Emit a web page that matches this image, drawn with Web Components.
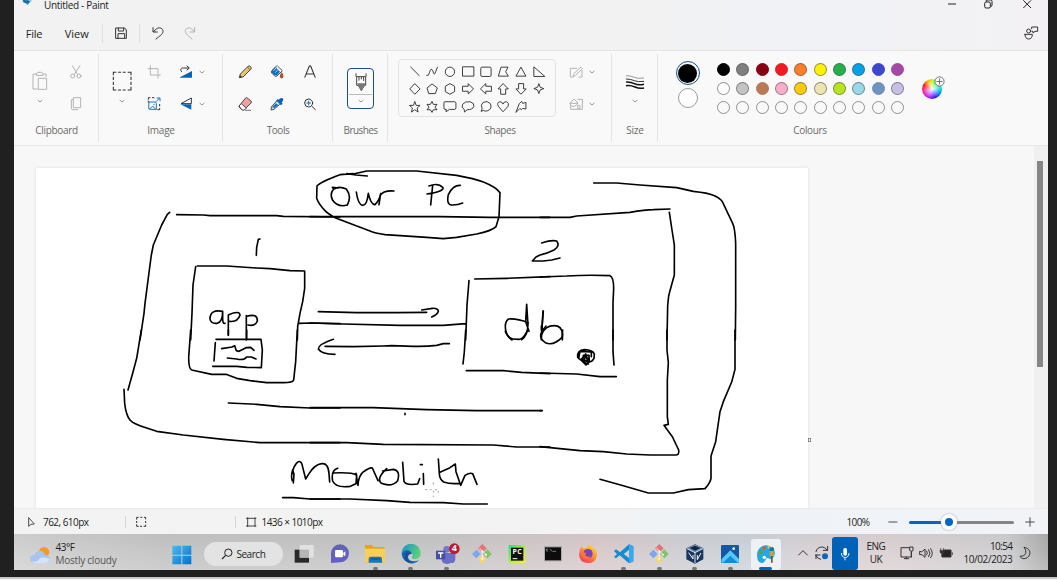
<!DOCTYPE html>
<html lang="en-GB">
<head>
<meta charset="utf-8">
<title>Untitled - Paint</title>
<style>
html,body{margin:0;height:100%;overflow:hidden}
body{font-family:"Open Sans","Noto Sans",sans-serif;font-size:10px;color:#222;background:#1c1c1c}
</style>
</head>
<body>
<paint-desktop></paint-desktop>
<script>
const define=(tag,css,html,after)=>customElements.define(tag,class extends HTMLElement{
  connectedCallback(){
    if(this.shadowRoot)return;
    const r=this.attachShadow({mode:'open'});
    r.innerHTML=`<style>:host{display:block;box-sizing:border-box}*{box-sizing:border-box}${css}</style>`+(typeof html==='function'?html(this):html);
    if(after)after(this,r);
  }
});

/* A single line of text, tracked to occupy the width given in "w". */
define('ui-label',':host{display:block;white-space:nowrap;line-height:14px;flex:none}span{display:inline-block}','<span><slot></slot></span>',(el,r)=>{
  const w=parseFloat(el.getAttribute('w'));
  if(!w)return;
  const s=r.querySelector('span'),n=el.textContent.length;
  const d=(w-s.getBoundingClientRect().width)/n;
  s.style.letterSpacing=d.toFixed(3)+'px';
  el.style.width=w+'px';
});

/* name: [centre x, centre y, width, height, markup]; artwork is on a grid three units to the pixel */
const L='fill="none" stroke="#333" stroke-width="3" stroke-linejoin="round" stroke-linecap="round"';
const G='fill="none" stroke="#b4b4b4" stroke-width="3" stroke-linejoin="round" stroke-linecap="round"';
const git='<path d="M396 117l13 13-13 13-13-13z" fill="#e57373"/><path d="M378 134l13 13-13 13-13-13z" fill="#7ea6e8"/><path d="M411 133l13 14-13 13-13-13z" fill="#84c26b"/><path d="M395 150l13 13-13 13-13-13z" fill="#f5d778"/><path d="M387 129l20 20M396 140v22" stroke="#eee" stroke-width="3"/><circle cx="396" cy="139" r="3" fill="#fff"/><circle cx="407" cy="149" r="3" fill="#fff"/><circle cx="396" cy="161" r="3" fill="#fff"/>';
const ICONS={
 logo:[82,2,10,10,'<path d="M68 -8h28l-2 12-6 3-3 7-7-5-8-3z" fill="#2c86bd"/><path d="M72 0l7 7 3-3 7 1" stroke="#17486b" stroke-width="3" fill="none"/><path d="M86-4l8 8" stroke="#9cd9ef" stroke-width="4"/>'],
 min:[876,11,10,10,'<path d="M864 11h24" stroke="#222" stroke-width="3"/>'],
 restore:[986,11,10,10,'<rect x="976" y="5" width="17" height="18" rx="4" fill="none" stroke="#222" stroke-width="3"/><path d="M981 4v-5h13q4 0 4 4v13l-5 4" fill="none" stroke="#222" stroke-width="3"/>'],
 close:[1101,11,10,10,'<path d="M1090 0l23 23M1113 0l-23 23" stroke="#222" stroke-width="3"/>'],
 save:[364,97,14,14,`<path ${L} d="M349 82h26l5 6v25h-31zM356 82v9h16v-9M355 113v-14h20v14"/>`],
 undo:[475,97,14,14,`<path ${L} d="M460 81v13h13M461 93l9-8c8-7 21-3 20 8-1 8-9 12-21 22"/>`],
 redo:[570,97,14,14,`<path ${G} d="M584 80v14h-14M583 92l-8-7c-8-7-20-3-19 8 1 7 9 12 20 22"/>`],
 person:[1113,97,16,16,`<g ${L}><circle cx="1106" cy="91" r="6"/><path d="M1095 101h22c0 9-4 14-11 14s-11-5-11-14zM1115 84v-5h18v13h-8l-6 5v-5h-3"/></g>`],
 paste:[119,243,18,20,`<path ${G} d="M108 222h-10v45h13M128 222h9v8M108 225v-4l5-4h10l5 4v4zM115 235h24v33h-24z"/>`],
 cut:[227,217,14,16,`<g ${G}><path d="M216 198l16 27M239 198l-18 27"/><circle cx="217" cy="229" r="6"/><circle cx="236" cy="229" r="6"/></g>`],
 copy:[226,313,14,16,`<path ${G} d="M219 294h21v30h-21zM218 300h-6v25q0 5 5 5h15"/>`],
 chev:[119,303,8,6,'<path d="M112 300l7 6 7-6" fill="none" stroke="#888" stroke-width="2.6"/>'],
 select:[364,243,20,20,'<path d="M338 226v-9h9M352 217h9M366 217h9M381 217h10v9M391 230v10M391 245v10M391 260v10h-10M375 270h-9M361 270h-9M347 270h-9v-10M338 255v-10M338 240v-10" fill="none" stroke="#333" stroke-width="3.2"/>'],
 crop:[461,217,14,14,`<path ${G} d="M450 198v28h30M443 207h30v28"/>`],
 resize:[461,314,14,14,'<path d="M444 310v-6M444 301v-6h6M455 295h7M478 314v7M478 326v5h-7" fill="none" stroke="#333" stroke-width="3"/><path d="M446 308h18q4 0 4 4v18h-18q-5 0-5-4zM447 330l10-10 9 10M467 307l11-11M469 296h10v10" fill="none" stroke="#2574b9" stroke-width="3"/><circle cx="461" cy="315" r="2" fill="#2574b9"/>'],
 rotate:[559,217,14,14,'<path d="M541 233l36-19v20h-36z" fill="#0864b0"/><path d="M547 217c-8-6-2-12 4-12h17M561 198l8 7-8 7" fill="none" stroke="#333" stroke-width="3"/>'],
 flip:[558,313,14,14,'<path d="M574 295l-31 17h31z" fill="#fff" stroke="#333" stroke-width="3"/><path d="M541 314h33v16z" fill="#0864b0"/>'],
 pencil:[736,217,16,16,'<path d="M719 234l3-11 23-23q5-3 8 1 4 4 0 8l-23 23z" fill="#e8c66f" stroke="#333" stroke-width="2.6"/><path d="M743 202l8 8" stroke="#333" stroke-width="2"/><path d="M719 234l2-8 6 6z" fill="#333"/>'],
 bucket:[833,217,16,16,'<path d="M818 212l15-14 16 15-16 16q-4 3-8-1l-7-7q-4-4 0-9z" fill="#fff" stroke="#333" stroke-width="2.6"/><path d="M818 212l10-10 14 14-9 11q-4 2-8-1l-7-6z" fill="#116eb9"/><path d="M822 214l13-15M828 219l11-13" stroke="#9dd9ff" stroke-width="3"/><path d="M847 219q8 16 0 16-8-1 0-16z" fill="#bd552c" stroke="#9e451f" stroke-width="3"/>'],
 text:[930,217,14,14,'<path d="M914 234l14-35h4l14 35M920 223h20" fill="none" stroke="#333" stroke-width="3.2"/>'],
 eraser:[736,314,16,16,'<path d="M718 320l20-24q2-2 5 0l11 9q3 3 0 6l-20 20h-7l-9-8z" fill="#f1a0a2" stroke="#333" stroke-width="2.5"/><path d="M718 320l7-7 15 13-6 6h-7z" fill="#fff" stroke="#333" stroke-width="2.5"/><path d="M736 333h18" stroke="#333" stroke-width="2"/>'],
 picker:[833,313,16,16,'<path d="M838 300q6-8 12-4 5 5-3 12l3 4-5 5-15-14 5-5z" fill="#0864b0"/><path d="M832 304l-16 18-1 9 9-2 17-15" fill="#bfe3fb" stroke="#333" stroke-width="2.6"/><path d="M818 323l12-12 7 5-11 9z" fill="#1b78bf"/>'],
 zoom:[930,313,16,16,`<g ${L}><circle cx="926" cy="310" r="12"/><path d="M935 319l11 11"/></g><path d="M919 310h14M926 303v14" stroke="#1770b6" stroke-width="3"/>`],
 brush:[91,246,14,20,'<path d="M76 220v10h30v-10M78 231v25h5l9 16 9-16h4v-25" fill="#fff" stroke="#444" stroke-width="3"/><path d="M80 250h23v7l-11 15-10-15z" fill="#777"/><path d="M85 230v12M92 230v8M99 230v13" stroke="#444" stroke-width="3"/>'],
 edit:[736,217,16,16,`<path ${G} d="M738 206h-19v26h5M745 232h9v-19M727 231l3-9 18-18q5-2 7 3l-20 20z"/>`],
 fill:[736,314,16,16,`<path ${G} d="M741 300h14v30h-35v-11M718 312l12-13 12 12-10 10h-7zM719 312h22M742 318h6v9h-6z"/>`],
 size:[915,246,20,18,'<path d="M888 227q14 0 25 5t29 2" fill="none" stroke="#666" stroke-width="2"/><path d="M888 237q14 0 25 5t29 2" fill="none" stroke="#333" stroke-width="3"/><path d="M888 246q14-1 25 5t29 2M888 257q14-2 27 4t27 3" fill="none" stroke="#111" stroke-width="4.5"/>'],
 cursor:[93,51,10,12,'<path fill="none" stroke="#333" stroke-linejoin="round" stroke-width="2.6" d="M86 38v26l7-6 10-1z"/>'],
 sel2:[425,51,12,12,'<path d="M412 44v-7h6M423 37h6M434 37h5v6M439 48v6M439 59v5h-6M428 64h-6M418 64h-6v-6M412 54v-6" fill="none" stroke="#333" stroke-width="3"/>'],
 dims:[753,51,12,12,'<path d="M743 37v29M765 37v29M738 40h31M738 63h31" stroke="#333" stroke-width="2.7"/>'],
 minus:[578,277,10,10,'<path d="M564 277h27" stroke="#333" stroke-width="2.6"/>'],
 plus:[991,277,10,10,'<path d="M977 277h28M991 263v28" stroke="#333" stroke-width="2.6"/>'],
 weather:[120,150,22,20,'<circle cx="132" cy="142" r="16" fill="#f29a2c"/><path d="M103 174q-13-2-13-12 0-12 13-13 5-13 18-12 10 1 13 12 16 1 16 14-1 11-14 11z" fill="#a9c5ef"/><path d="M96 168q15 5 22-6t31 0q-2 12-13 12h-33q-5-1-7-6z" fill="#d5e3fa"/>'],
 start:[548,149,20,20,'<defs><linearGradient id="g" x2="1" y2="1"><stop stop-color="#43bdf0"/><stop offset="1" stop-color="#0870ca"/></linearGradient></defs><path d="M519 121h27v27h-27zM549 121h27v27h-27zM519 151h27v26h-27zM549 151h27v26h-27z" fill="url(#g)"/>'],
 search:[682,148,14,14,'<circle cx="686" cy="144" r="11" fill="none" stroke="#222" stroke-width="3"/><path d="M678 152l-11 11" stroke="#222" stroke-width="3.5"/>'],
 tasks:[911,148,22,20,'<path d="M883 135h43v39h-43z" fill="#292929"/><path d="M898 121h42v38h-42z" fill="#e4e4e4" opacity=".9"/><path d="M898 135h28v24h-28z" fill="#b6b6b6"/>'],
 chat:[1017,149,20,20,'<path d="M990 176V147a27 27 0 1 1 27 27z" fill="#6460bf"/><rect x="1002" y="137" width="24" height="22" rx="4" fill="#fff"/><path d="M1027 145l6-4v15l-6-4z" fill="#fff"/>'],
 folder:[75,148,22,20,'<path d="M45 121h20l6 6h33v47H45z" fill="#e4a51f"/><path d="M45 132h60v42H45z" fill="#f9cf5b"/><path d="M56 174v-12q0-6 6-6h28q6 0 6 6v12z" fill="#1478bd"/><path d="M63 163h27" stroke="#0d518c" stroke-width="3"/>'],
 edge:[181,147,20,20,'<defs><linearGradient id="g" x2="1" y2=".4"><stop stop-color="#168fd1"/><stop offset="1" stop-color="#5bd078"/></linearGradient></defs><path d="M153 145c2-38 56-38 57 1 0 16-20 20-27 12 5-7 5-17-9-18-11-1-19 3-21 5z" fill="url(#g)"/><path d="M153 145c10-13 27-12 31 2-14-3-19 20 4 22 7 0 13-2 18-5-14 18-51 14-53-19z" fill="#1263b1"/><path d="M172 151c-7 13 7 24 20 23-24 5-36-15-27-29 6-5 14-4 18 1-5-1-9 1-11 5z" fill="#194c91"/>'],
 teams:[289,145,28,24,'<circle cx="291" cy="131" r="10" fill="#7079ce"/><circle cx="310" cy="135" r="7" fill="#5158a8"/><path d="M276 142h41v20q-3 12-14 10-15 7-26-4z" fill="#6970c4"/><path d="M259 135h28v26h-28z" fill="#4850a5"/><path d="M265 142h16M273 142v14" stroke="#fff" stroke-width="4"/><circle cx="314" cy="129" r="16" fill="#bd1834"/>'],
 git:[395,147,20,20,git],
 pc:[499,147,18,20,'<defs><linearGradient id="g" x2="1" y2="1"><stop stop-color="#27db82"/><stop offset=".6" stop-color="#bdf233"/><stop offset="1" stop-color="#f9ee36"/></linearGradient></defs><rect x="474" y="120" width="50" height="54" fill="url(#g)"/><path d="M481 128h37v39h-37z" fill="#111"/><path d="M486 161h14" stroke="#fff" stroke-width="3"/>'],
 cmd:[606,147,20,20,'<path d="M579 123h54v46h-54z" fill="#a9abae"/><path d="M582 127h48v39h-48z" fill="#0c0c0c"/><path d="M591 132h-5v6h5M594 133v1M594 138v1M598 132l4 7M604 139h11" fill="none" stroke="#bbb" stroke-width="1.8"/>'],
 firefox:[713,148,20,20,'<defs><linearGradient id="g" x1=".8" y1="0" x2=".2" y2="1"><stop stop-color="#ffdf3b"/><stop offset=".45" stop-color="#ff9433"/><stop offset="1" stop-color="#f0325c"/></linearGradient></defs><path d="M694 124l5 9q6-4 11-2l5-12q10 7 15 14l2-4q11 12 7 27-5 20-27 19-24-2-26-24 0-16 8-27z" fill="url(#g)"/><circle cx="713" cy="147" r="14" fill="#7743b5"/><path d="M692 143q9 0 16 2-5 6-1 9 6 5 12-1-1 10-12 10-12-1-15-20z" fill="#ff7538"/>'],
 code:[821,148,20,20,'<path d="M836 119l13 6v45l-13 6-28-24-11 9-6-4 9-9-9-9 6-5 12 9z" fill="#198acd"/><path d="M836 135v25l-16-12z" fill="#ccd3d8"/><path d="M836 119l13 6v45l-13 6z" fill="#38a9ec"/>'],
 vbox:[1034,148,20,20,'<path d="M1034 119l25 12v33l-25 13-26-13v-33z" fill="#18355e"/><path d="M1034 119l25 12-25 12-26-12z" fill="#718aa8"/><path d="M1018 130l16-7 16 7-16 8z" fill="#102543"/><path d="M1010 132l24 12v31M1058 132l-24 12" fill="none" stroke="#d6e1ec" stroke-width="3"/><path d="M1015 144l13 19v-12M1052 145l-11 20v-14" fill="none" stroke="#f0f4f7" stroke-width="3"/>'],
 photos:[90,372,20,20,'<rect x="63" y="345" width="54" height="54" rx="4" fill="#1457a5"/><path d="M65 387l26-26 26 26v8q-2 4-6 4H69q-5 0-5-5z" fill="#55c9f3"/><path d="M68 399l23-22 23 22z" fill="#168bd3"/><circle cx="101" cy="356" r="4" fill="#e5f9ff"/>'],
 paint:[196,372,20,20,'<path d="M171 389q-7-27 11-39 18-10 35 4 12 14 0 30-5 7-13 1-8-3-10 6-3 9-12 8-8-1-11-10z" fill="#27a8dc"/><circle cx="180" cy="366" r="6" fill="#4da64b"/><circle cx="190" cy="354" r="5" fill="#e8562c"/><circle cx="205" cy="352" r="4" fill="#f6c637"/><circle cx="191" cy="382" r="5" fill="#f5faff"/><path d="M207 363h13v15h-13z" fill="#d29748"/><path d="M211 378h5v20h-5z" fill="#914b24"/><path d="M207 362v-12l5 5 3-5 5 5v7z" fill="#1f6ead"/>'],
 up:[309,370,12,10,'<path d="M295 377l14-14 14 14" fill="none" stroke="#333" stroke-width="3"/>'],
 sync:[368,371,16,16,`<path ${L} d="M350 367c3-17 25-19 33-5M385 351v12h-13M362 377h-13M350 377v11M350 379q5 10 14 11"/><circle cx="377" cy="381" r="9" fill="#0866bd"/>`],
 mic:[435,370,12,16,'<rect x="430" y="352" width="11" height="23" rx="5" fill="#fff"/><path d="M424 367c0 18 23 18 23 0M435 381v8" fill="none" stroke="#e4f3ff" stroke-width="3"/>'],
 net:[619,371,16,16,`<path ${L} d="M625 355h-24v28h31v-14M611 388h13M617 383v5M628 353h9v11q-4 4-9 0zM632 366v17"/>`],
 sound:[677,370,16,14,`<path ${L} d="M658 366v9h7l9 8v-25l-9 8zM679 364q5 7 0 12M685 360q8 11 0 21M691 357q10 14 0 27"/>`],
 battery:[736,370,16,14,'<path d="M728 361h23v21h-27v-9" fill="#222" stroke="#333" stroke-width="3"/><path d="M755 368v8M720 356v7M728 356v7M718 363h13v6q-6 7-12 0zM724 371v10" fill="#333" stroke="#333" stroke-width="2.5"/>'],
 moon:[977,371,14,16,`<path ${L} d="M975 354c25 4 20 32-1 34-6 0-10-3-12-7 18 0 22-12 13-27z"/>`]
};
define('ui-icon',':host{display:block;flex:none}svg{display:block}',el=>{
  const [x,y,w,h,b]=ICONS[el.getAttribute('name')];
  return `<svg width="${w}" height="${h}" viewBox="${x-w*1.5} ${y-h*1.5} ${w*3} ${h*3}">${b}</svg>`;
});
const ic=n=>`<ui-icon name="${n}"></ui-icon>`;

define('title-bar',`:host{height:17px;display:flex;padding-left:8px}
.logo{width:22px;margin-top:-4px}.t{line-height:10px;height:10px}.r{margin-left:auto;display:flex;margin-top:-1px;padding-right:16.5px}.r ui-icon{width:10px}.r ui-icon+ui-icon{margin-left:26.7px}.r ui-icon+ui-icon+ui-icon{margin-left:28.3px}`,
`<div class="logo">${ic('logo')}</div><ui-label class="t" w="64.5">Untitled - Paint</ui-label><div class="r">${ic('min')}${ic('restore')}${ic('close')}</div>`);

define('menu-bar',`:host{height:33px;display:flex;align-items:center;padding-left:11.7px;font-size:11px}
i{width:1px;height:19px;background:#dfdfdf}.p{margin-left:auto;margin-right:9px}ui-icon{margin-top:-1px}`,
`<ui-label w="16.5">File</ui-label><ui-label w="24" style="margin-left:22.5px">View</ui-label><i style="margin-left:13.3px"></i><div style="margin-left:11.4px">${ic('save')}</div><i style="margin-left:10.6px"></i><div style="margin-left:11px">${ic('undo')}</div><div style="margin-left:17.7px">${ic('redo')}</div><div class="p">${ic('person')}</div>`);

define('ribbon-group',`:host{height:94px;display:flex;flex-direction:column;position:relative;flex:none;color:#6b6b6b}
:host::after{content:"";position:absolute;right:0;top:3px;height:88px;width:1px;background:#e4e4e4}
:host([last])::after{display:none}
.body{height:72px;padding-top:5px}
ui-label{margin:0 auto}`,el=>`<div class="body"><slot></slot></div><ui-label w="${el.getAttribute('lw')}">${el.getAttribute('label')}</ui-label>`);

const cellCss='.g{display:grid;grid-template-rows:32px 32px;justify-items:center;align-items:center}.tall{grid-row:1/3;display:flex;flex-direction:column;align-items:center;height:64px;padding-top:15px}.tall .c{margin-top:auto;margin-bottom:16px}';
define('clipboard-tools',cellCss+'.g{grid-template-columns:51px 21.5px}',`<div class="g"><div class="tall">${ic('paste')}<div class="c">${ic('chev')}</div></div>${ic('cut')}${ic('copy')}</div>`);
define('image-tools',cellCss+'.g{grid-template-columns:45px 20px 10px 24px 8px}',`<div class="g"><div class="tall">${ic('select')}<div class="c">${ic('chev')}</div></div>${ic('crop')}<b></b>${ic('rotate')}${ic('chev')}${ic('resize')}<b></b>${ic('flip')}${ic('chev')}</div>`);
define('draw-tools',cellCss+'.g{grid-template-columns:32.3px 32.3px 32.3px;padding-left:6px}',`<div class="g">${['pencil','bucket','text','eraser','picker','zoom'].map(ic).join('')}</div>`);
define('brush-button',`.b{width:27px;height:41px;margin:12px 0 0 14px;border:1px solid #174f91;border-radius:4px;background:#fafafa;display:flex;flex-direction:column;align-items:center;padding-top:3px}
hr{width:23px;border:0;height:1px;background:#bbb;margin:2px 0 3px}`,`<div class="b">${ic('brush')}<hr>${ic('chev')}</div>`);

const SHAPES=[
 '<path d="M240 200l27 27"/>','<path d="M290 226q7 3 10-10 4-16 10-3 3 17 8 2 3-10 6-15"/>','<circle cx="360" cy="215" r="14"/>','<path d="M397 200h34v28h-34z"/>','<rect x="451" y="201" width="31" height="28" rx="4"/>','<path d="M514 201h21l-7 14 8 13h-30z"/>','<path d="M573 201l15 27h-30z"/>','<path d="M611 200v29h33z"/>',
 '<path d="M253 252l16 16-16 16-15-16z"/>','<path d="M307 253l16 12-6 17h-20l-5-17z"/>','<path d="M360 252l14 8v16l-14 8-14-8v-16z"/>','<path d="M397 260h17v-8l16 16-16 15v-8h-17z"/>','<path d="M483 260h-17v-8l-16 16 16 15v-8h17z"/>','<path d="M520 252l16 16h-8v16h-15v-16h-8z"/>','<path d="M573 284l16-16h-8v-16h-15v16h-8z"/>','<path d="M626 252l4 11 11 4-11 4-4 11-4-11-11-4 11-4z"/>',
 '<path d="M253 304l4 12h12l-9 8 3 12-10-7-10 7 3-12-9-8h12z"/>','<path d="M307 304l4 9h11l-6 8 6 8h-11l-4 8-5-8h-10l6-8-6-8h10z"/>','<path d="M345 305h29q4 0 4 5v13q0 5-4 5h-15l-11 7 1-7h-4q-3 0-3-5v-14q0-4 3-4z"/>','<path d="M402 328q-9-6-5-15 7-10 23-8 14 4 11 14-3 10-20 10l-8 7z"/>','<path d="M452 334l3-8q-6-12 3-19 13-7 22 4 6 15-8 21-8 3-13-1z"/>','<path d="M520 335l-14-16q-6-11 4-14 8 0 10 7 2-8 11-7 9 5 4 14z"/>','<path d="M558 337l10-26 7-7 3 6 10-3v20l-10-2-4 4-4-4z"/>'];
define('shape-gallery',`:host{display:flex;padding-left:10px}
.box{width:158px;height:58px;margin-top:3px;border:1px solid #e2e2e2;border-radius:4px;padding:2.8px 0 0 6.5px;display:grid;grid-template-columns:repeat(8,17.75px);grid-template-rows:repeat(3,17.6px)}
svg{display:block;width:17.75px;height:17.6px;overflow:visible}
.side{display:grid;grid-template:32px 32px/16px 16px;margin-left:11.5px;align-items:center;justify-items:center}`,
()=>`<div class="box">${SHAPES.map((s,i)=>{const x=253.3+53.25*(i%8),y=215+52.6*Math.floor(i/8);return `<svg viewBox="${x-26.6} ${y-26.4} 53.25 52.8" fill="none" stroke="#333" stroke-width="2.8">${s}</svg>`}).join('')}</div><div class="side">${ic('edit')}${ic('chev')}${ic('fill')}${ic('chev')}</div>`);
define('size-picker',':host{display:flex;flex-direction:column;align-items:center;padding-top:17px}div{margin-top:7px}',`${ic('size')}<div>${ic('chev')}</div>`);

const COLS=['#000','#7f7f7f','#880015','#ed1c24','#ff7f27','#fff200','#22b14c','#00a2e8','#3f48cc','#a349a4','#fff','#c3c3c3','#b97a57','#ffaec9','#ffc90e','#efe4b0','#b5e61d','#99d9ea','#7092be','#c8bfe7',...Array(10).fill('transparent')];
define('colour-palette',`:host{display:flex;padding-left:17.5px}
.cur{width:24px}.one{width:24px;height:24px;border-radius:50%;border:1px solid #174f91;padding:1px;margin-top:5px}.one:before{content:"";display:block;width:19px;height:19px;border-radius:50%;background:#000;margin:.5px}
.two{width:20px;height:20px;border:1px solid #999;background:#fff;border-radius:50%;margin:3px 0 0 2px}
.sw{display:grid;grid-template-columns:repeat(10,19.37px);grid-template-rows:repeat(3,19.3px);margin:3.5px 0 0 14.2px;place-items:center}
.sw i{width:13px;height:13px;border-radius:50%;border:1px solid rgba(80,80,80,.6)}
.w{margin:14px 0 0 15px;position:relative;width:22px;height:30px;padding-top:9px}
.wheel{width:20px;height:20px;border-radius:50%;background:radial-gradient(circle,#fff 0,#fff0 65%),conic-gradient(from 20deg,#50ff20,#00f0d0 60deg,#0070ff 105deg,#3010ff 140deg,#c020ff 190deg,#ff2090 240deg,#ff1010 275deg,#ffb000 310deg,#b8ff20 345deg,#50ff20)}
.w svg{position:absolute;right:-1px;top:6px}`,
`<div class="cur"><div class="one"></div><div class="two"></div></div><div class="sw">${COLS.map((c,i)=>`<i style="background:${c}${i<20&&[0,2,3,8,9,12,18].includes(i)?';border-color:'+c:''}"></i>`).join('')}</div><div class="w"><div class="wheel"></div><svg width="11" height="11" viewBox="0 0 11 11"><circle cx="5.5" cy="5.5" r="4.6" fill="#f8f8f8" stroke="#777"/><path d="M2.5 5.5h6M5.5 2.5v6" stroke="#777"/></svg></div>`);

define('paint-ribbon',':host{display:flex;height:96px;border-top:1px solid #e5e5e5;border-bottom:1px solid #e7e7e7;background:#f9f9f9}',
`<ribbon-group label="Clipboard" lw="42.5" style="width:85px"><clipboard-tools></clipboard-tools></ribbon-group>
<ribbon-group label="Image" lw="27.5" style="width:124px"><image-tools></image-tools></ribbon-group>
<ribbon-group label="Tools" lw="22.5" style="width:110px"><draw-tools></draw-tools></ribbon-group>
<ribbon-group label="Brushes" lw="34" style="width:55px"><brush-button></brush-button></ribbon-group>
<ribbon-group label="Shapes" lw="31" style="width:224px"><shape-gallery></shape-gallery></ribbon-group>
<ribbon-group label="Size" lw="17.5" style="width:46px"><size-picker></size-picker></ribbon-group>
<ribbon-group last label="Colours" lw="33.5" style="width:304px"><colour-palette></colour-palette></ribbon-group>`);

/* Each tile is one region of the drawing, on the same three-to-one grid as the icons. */
const tile=(x,y,d,extra='')=>`<g transform="translate(${x} ${y}) scale(.33333)" ${extra}><path d="${d}"/></g>`;
define('paint-canvas',`:host{height:362px;display:flex;background:#f7f7f7;padding:22px 0 0 22px;overflow:hidden}
.paper{width:772px;height:340px;background:#fff;flex:none;box-shadow:0 0 3px #ddd}
svg{display:block}.h{width:3px;height:4px;border:1px solid #888;margin:270px 0 0 0;background:#fff}
.track{margin-left:auto;margin-top:-22px;width:14px;height:362px;background:#f0f0f0;padding:15px 0 0 3px}.thumb{width:6px;height:206px;background:#868686}`,
`<div class="paper"><svg width="772" height="340" viewBox="36 168 772 340"><g fill="none" stroke="#000" stroke-width="4.9" stroke-linecap="round" stroke-linejoin="round">
${tile(110,160,'M179 157L172 163 155 195 130 255 124 285 120 315L105 430 102 460 90 540M200 164L280 165 300 167H500L520 169 690 171M450 237L445 238 440 262 439 286M257 320L249 375 246 460 242 540M262 318H350L440 324 480 326 540 332 584 333 584 385 578 425 570 460 563 500 562 540M568 490L600 489 690 491M337 454Q300 447 300 477 302 492 322 490 338 486 338 454V478Q338 492 345 490M355 466V526M356 464Q390 450 390 466 383 487 359 484M409 467V540M410 469Q443 459 442 483 436 500 414 495')}
${tile(110,330,'M94 0L80 85 68 130 54 180M42 178L44 220Q48 255 60 270 70 282 110 294L140 304 220 315 340 328 450 338H690M242 0L236 82Q236 117 245 120L305 133H348L380 145 420 152 470 158H520Q549 158 551 150L557 95 562 0M355 0V16M410 0V26M318 28L453 28 457 60 454 113 411 112 380 109H308M316 38L312 93M335 56L366 51 374 47 379 62 387 64 408 53 422 52 432 61M352 84L380 87Q402 92 410 81H424L438 87M355 219L440 223 510 230 600 234H690M550 459L552 433 548 419Q542 440 547 452M547 430Q550 409 562 397 572 390 576 403L587 447 597 431Q615 403 635 401 655 398 657 431L659 456M518 503L550 503 600 507H690')}
${tile(310,160,'M172 48L138 45 110 41M130 42L170 33H320L440 46Q494 56 520 66 558 81 570 98L567 170 558 200Q545 213 500 222L440 232 400 236 350 232 225 224Q193 219 180 213L75 173Q53 160 48 155 27 135 20 115L21 78Q30 66 90 44L130 41M0 170H390L540 172H720M86 84L67 82 71 87Q58 102 68 121 83 143 112 135 126 110 109 87 88 77 71 87M139 96Q144 134 158 136 171 136 175 100 183 135 195 134 209 120 212 101L207 134M210 107Q219 91 252 93M368 76L362 135M357 78Q384 67 399 83 401 95 351 102M451 76Q428 75 415 104 409 132 423 135 442 136 458 129M25 455L140 458H260L350 457M335 450L367 445Q385 444 385 454 382 465 365 471M0 489L100 492 270 496H400L467 491M477 362L471 435 467 540M494 357L590 355 720 350M650 433L647 485 657 514M650 433L653 480Q658 522 635 539M606 540Q588 526 587 510 583 485 596 477 621 475 655 488M699 453L694 540')}
${tile(310,330,'M70 28Q25 43 25 57 35 73 75 73M45 49L130 50 220 48 245 47 310 49Q350 50 380 46L400 41 418 41M467 0L463 66 459 102M469 122L580 122 635 127 720 131M0 233H190L350 239 500 242H697M285 250V254M0 338H110L220 343 550 345 620 351H720M586 4Q596 27 609 27L628 28Q640 27 653 0M83 415Q62 422 68 453 78 475 121 469L138 461 140 435Q125 426 68 429M138 430L144 466Q145 440 158 427 180 411 187 414L204 452M230 416Q198 446 214 460 246 472 263 452 272 421 250 418L218 423M278 397L282 454Q288 467 323 462L329 446M331 404H337M340 431L341 463M385 387L388 430Q388 448 401 456 421 463 450 460M390 427L420 413 436 402 438 425 452 466 465 436Q480 427 488 431L501 463M0 507H120L230 512 300 517 400 518 460 522H532')}
${tile(540,160,'M161 69H230L300 75 410 83 460 94Q505 99 520 106 541 115 547 125L578 190Q585 204 587 250V440L586 540M0 172H90L110 168 270 157Q315 149 340 149L390 147M388 157L396 210 403 255V345L390 392 386 408 383 437 381 540M5 249Q35 239 50 243 61 258 42 270 25 279 0 285L-12 291-23 303 10 303 35 300 60 294M0 351L80 348Q145 344 210 347 221 351 221 385L219 430V540M10 453L4 525M5 523Q15 497 43 497 65 497 68 523L67 540')}
${tile(540,330,'M68 0L66 22Q40 49 16 38 0 28 2 14 8-3 18-12M4-12V0M219 0V65L222 105M0 129L110 132 180 140H229M381 0V60L385 98 382 150V260L385 283 372 286 397 320 416 360Q419 376 405 375H330L260 372 190 365 120 362 0 350M0 242H5M585 0V118L575 156 550 215 540 245 527 335 514 375 513 380V445Q511 458 495 476L445 479 400 489H325L250 467 180 448')}
${tile(540,330,'M113 82Q110 60 134 59 158 60 163 72 164 94 148 96L138 105 125 92 116 85 120 64 154 66 154 80M124 88L137 72 145 102 128 95 130 76 147 76 148 95 133 92 136 78 146 88','stroke-width="5"')}
<g transform="translate(310 330) scale(.33333)" stroke="#777" stroke-width="2" stroke-linecap="butt"><path d="M370 457v7M370 482v6M370 497v4M345 479h6M360 479h5M375 479h6M385 483v5"/></g></g></svg></div><div class="h"></div><div class="track"><div class="thumb"></div></div>`);

define('status-bar',`:host{height:26px;display:flex;align-items:center;background:linear-gradient(90deg,#f3f3f3 55%,#eef3f7 65%,#f1f3f7);padding-left:12px;border-top:1px solid #ebebeb}
i{width:1px;height:12px;background:#d4d4d4}.s{width:105px;height:3px;border-radius:2px;background:linear-gradient(90deg,#0067c0 40px,#858585 40px);margin:1px 0 0 7px;display:flex;align-items:center}.k{width:16px;height:16px;border-radius:50%;background:#0067c0;border:4px solid #fff;box-shadow:0 0 2px #999;margin-left:32.5px}`,
`${ic('cursor')}<ui-label w="45.5" style="margin-left:7px">762, 610px</ui-label><i style="margin-left:36px"></i><div style="margin-left:9.5px">${ic('sel2')}</div><i style="margin-left:88px"></i><div style="margin-left:8.5px">${ic('dims')}</div><ui-label w="61" style="margin-left:5px">1436 × 1010px</ui-label><ui-label w="23" style="margin-left:524px">100%</ui-label><div style="margin-left:18px">${ic('minus')}</div><div style="margin-left:11px" class="s"><div class="k"></div></div><div style="margin-left:11.3px">${ic('plus')}</div>`);

define('task-icon',`:host{width:35.5px;height:36px;display:flex;flex-direction:column;align-items:center;position:relative;padding-top:10px}
:host([tall]){padding-top:8px}
:host([run])::after{content:"";position:absolute;bottom:0;left:15.5px;width:5px;height:3px;border-radius:2px;background:#777}
:host([active])::before{content:"";position:absolute;left:2.7px;top:5px;width:30px;height:30.5px;border-radius:3px;background:#edf1f5}
:host([active])::after{left:11.5px;width:13px;background:#0067c0}
ui-icon{position:relative}
.t{position:absolute;color:#fff;font-weight:700}`,el=>ic(el.getAttribute('name'))+(el.hasAttribute('badge')?`<ui-label class="t" style="left:23.4px;top:7px;font-size:9px">${el.getAttribute('badge')}</ui-label>`:'')+(el.getAttribute('name')==='pc'?'<ui-label class="t" w="9.5" style="left:13.2px;top:10.5px;font-size:7px">PC</ui-label>':''));
define('task-bar',`:host{height:36px;display:flex;background:linear-gradient(#8881,#fff1 50%,#fff3),linear-gradient(90deg,#d0d0d0,#c2c2c2 15%,#c4c4c5 40%,#d8c8ca 57%,#d0ccd0 63%,#c9d2d8 70%,#d5d0d5 76%,#dbd0d2 84%,#cdcdcf 96%,#aaa)}
.wx{padding:11px 0 0 15px;width:41.5px}.txt{padding-top:7px}.txt ui-label{line-height:13px}
.grey{color:#555}.search{width:79px;height:24px;border-radius:12px;background:#e3e3e3;margin:8px 3.5px 0 4.5px;display:flex;align-items:center;padding-left:16px;flex:none}
.tray{display:flex;height:36px;align-items:center;flex:none;padding-top:1px}.mic{width:26px;height:33px;border-radius:3px;background:#0062b6;margin:2px 0 0 2px;display:flex;align-items:center;justify-content:center}
.c{display:flex;flex-direction:column;align-items:center}.e{display:flex;flex-direction:column;align-items:flex-end}.start{width:35.5px;margin-left:47.4px;padding-top:10.5px;display:flex;justify-content:center;flex:none}`,
`<div class="wx">${ic('weather')}</div><div class="txt"><ui-label w="19">43°F</ui-label><ui-label class="grey" w="61">Mostly cloudy</ui-label></div><div class="start">${ic('start')}</div><div class="search">${ic('search')}<ui-label w="29" style="margin-left:2.5px">Search</ui-label></div>
${[['tasks',''],['chat',''],['folder','run'],['edge','run'],['teams','run tall badge="4"'],['git',''],['pc',''],['cmd',''],['firefox',''],['code','run'],['git','run'],['vbox','run'],['photos','run'],['paint','run active']].map(([n,a])=>`<task-icon name="${n}" ${a}></task-icon>`).join('')}
<div class="tray"><div style="margin-left:14px">${ic('up')}</div><div style="margin-left:5px">${ic('sync')}</div><div class="mic">${ic('mic')}</div><div class="c" style="margin-left:8px"><ui-label w="19">ENG</ui-label><ui-label w="12.5" style="margin-top:-1px">UK</ui-label></div><div style="margin-left:13.5px">${ic('net')}</div><div style="margin-left:3.5px">${ic('sound')}</div><div style="margin-left:3.5px">${ic('battery')}</div><div class="e" style="margin-left:9.5px"><ui-label w="22.5">10:54</ui-label><ui-label w="49" style="margin-top:-1.5px">10/02/2023</ui-label></div><div style="margin-left:6px">${ic('moon')}</div></div>`);

define('paint-desktop',`:host{width:1057px;height:580px;background:linear-gradient(#202020 577px,#c8c8c8 577px,#c8c8c8 579px,#fafafa 579px)}
main{display:block;width:1034px;height:570px;margin-left:14px;overflow:hidden;background:#f3f3f3}
header{height:50px;background:linear-gradient(90deg,#f2f2f2 60%,#f0f2f6 75%,#f3f1f3)}`,
`<main><header><title-bar></title-bar><menu-bar></menu-bar></header><paint-ribbon></paint-ribbon><paint-canvas></paint-canvas><status-bar></status-bar><task-bar></task-bar></main>`);
</script>
</body>
</html>
